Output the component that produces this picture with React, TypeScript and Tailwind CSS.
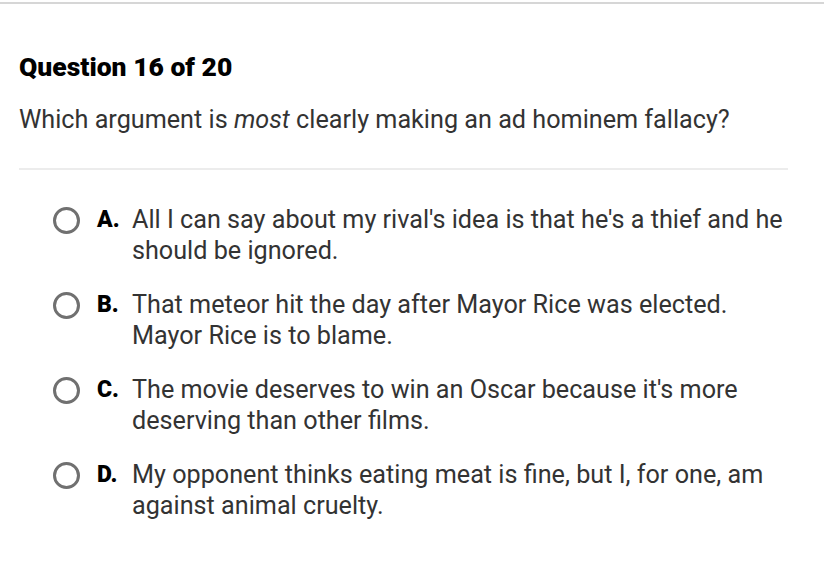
import React from 'react';

const options = [
  { letter: 'A.', text: "All I can say about my rival's idea is that he's a thief and he should be ignored." },
  { letter: 'B.', text: 'That meteor hit the day after Mayor Rice was elected. Mayor Rice is to blame.' },
  { letter: 'C.', text: "The movie deserves to win an Oscar because it's more deserving than other films." },
  { letter: 'D.', text: 'My opponent thinks eating meat is fine, but I, for one, am against animal cruelty.' },
];

export default function App() {
  return (
    <div className="w-[824px] h-[576px] bg-white overflow-hidden font-['Roboto',sans-serif]">
      <div className="h-[2px] mt-[2px] bg-[#d6d6d6]" />
      <div className="px-[19px]">
        <h1 className="mt-[48px] text-[26.5px] leading-[30px] font-black text-black">Question 16 of 20</h1>
        <p className="mt-[23px] text-[25.2px] leading-[30px] text-[#333]">
          Which argument is <i>most</i> clearly making an ad hominem fallacy?
        </p>
        <div className="mt-[33px] mr-[17px] h-[2px] bg-[#ececec]" />
        <div className="mt-[34px] flex flex-col gap-[23px]">
          {options.map((o) => (
            <div key={o.letter} className="flex items-start">
              <div className="ml-[34px] mt-[3px] w-[27px] h-[27px] rounded-full border-[3px] border-[#707070] shrink-0" />
              <span className="ml-[17px] w-[35px] shrink-0 text-[23px] leading-[31px] font-black text-black">{o.letter}</span>
              <p className="w-[655px] text-[25.2px] leading-[31px] text-[#333]">{o.text}</p>
            </div>
          ))}
        </div>
      </div>
    </div>
  );
}
